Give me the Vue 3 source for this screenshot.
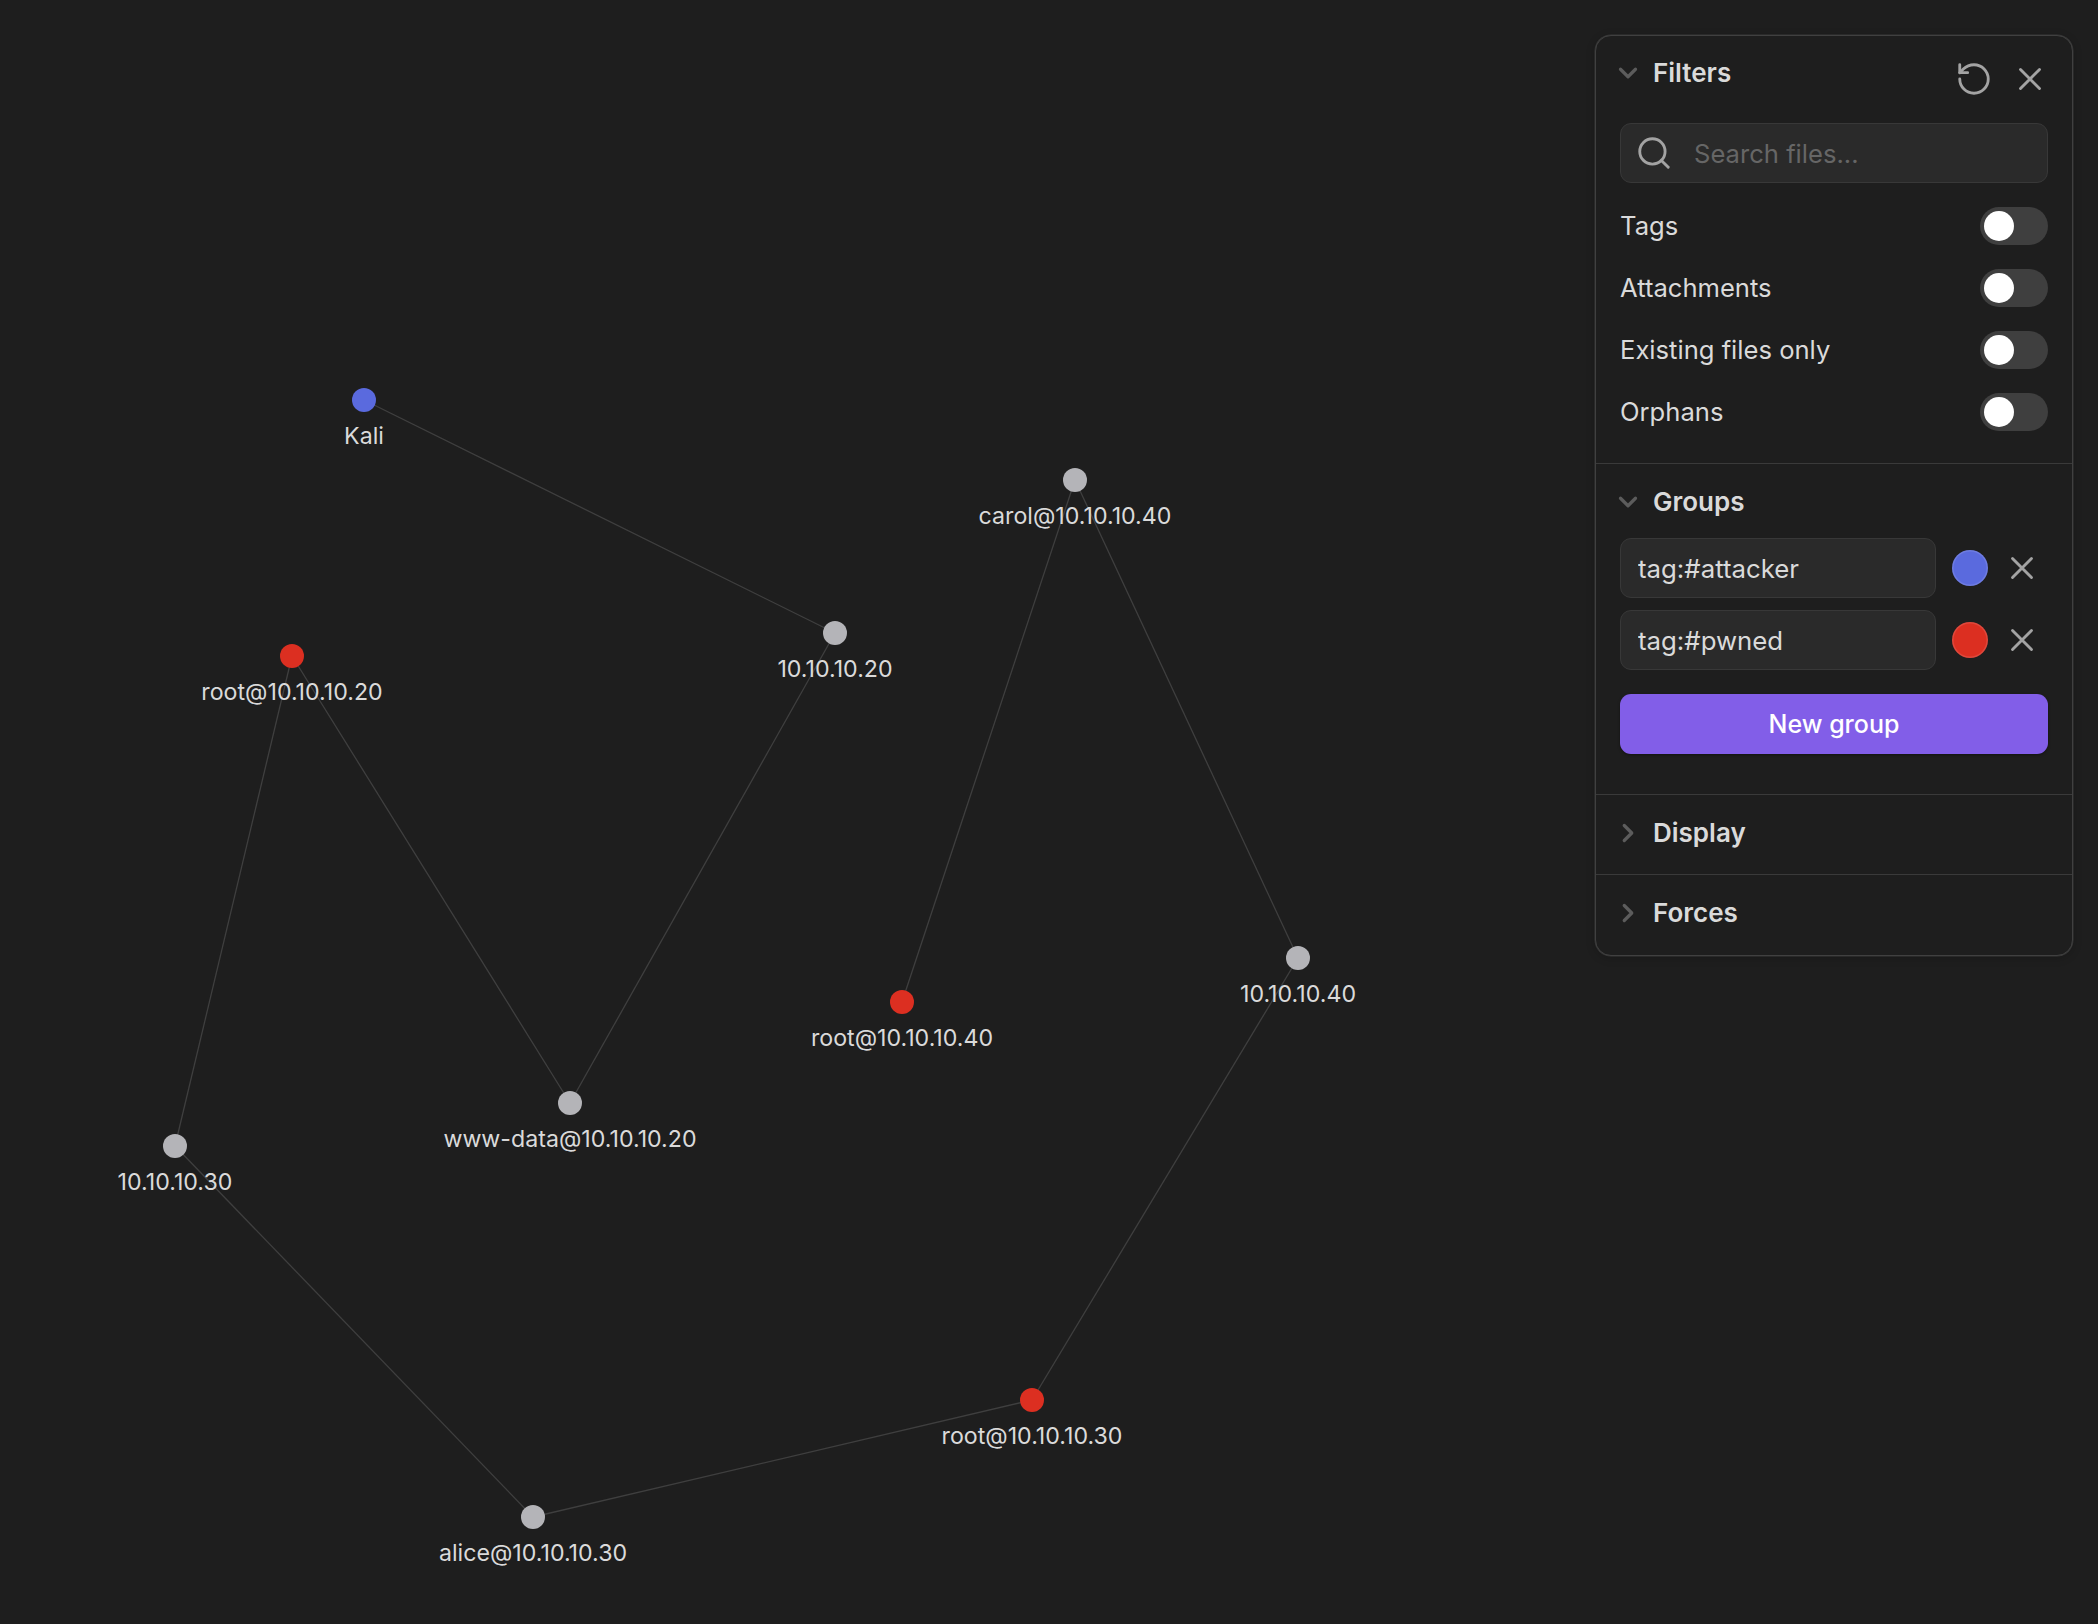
<template>
  <div class="page">
    <svg class="graph" width="2098" height="1624" viewBox="0 0 2098 1624">
      <line
        v-for="(edge, i) in edges"
        :key="i"
        :x1="nodes[edge[0]].x"
        :y1="nodes[edge[0]].y"
        :x2="nodes[edge[1]].x"
        :y2="nodes[edge[1]].y"
        class="edge"
      />
      <g v-for="(node, id) in nodes" :key="id">
        <circle :cx="node.x" :cy="node.y" r="12" :fill="colors[node.type]" />
        <text :x="node.x" :y="node.y + 43.5" text-anchor="middle" class="node-label">{{ node.label }}</text>
      </g>
    </svg>

    <aside class="panel">
      <section class="section">
        <div class="section-head">
          <svg class="chevron" viewBox="0 0 24 24"><path d="m6 9 6 6 6-6" /></svg>
          <span class="section-title">Filters</span>
          <div class="head-actions">
            <svg class="icon" viewBox="0 0 24 24">
              <path d="M3 12a9 9 0 1 0 9-9 9.75 9.75 0 0 0-6.74 2.74L3 8" />
              <path d="M3 3v5h5" />
            </svg>
            <svg class="icon" viewBox="0 0 24 24"><path d="M18 6 6 18M6 6l12 12" /></svg>
          </div>
        </div>
        <div class="search">
          <svg class="icon search-icon" viewBox="0 0 24 24">
            <circle cx="11" cy="11" r="8" />
            <path d="m21 21-4.3-4.3" />
          </svg>
          <input class="search-input" placeholder="Search files..." />
        </div>
        <div v-for="label in filters" :key="label" class="toggle-row">
          <span class="toggle-label">{{ label }}</span>
          <div class="toggle"><div class="knob"></div></div>
        </div>
      </section>

      <section class="section">
        <div class="section-head">
          <svg class="chevron" viewBox="0 0 24 24"><path d="m6 9 6 6 6-6" /></svg>
          <span class="section-title">Groups</span>
        </div>
        <div class="groups">
          <div v-for="group in groups" :key="group.query" class="group-row">
            <input class="group-input" :value="group.query" />
            <div class="swatch" :style="{ background: group.color }"></div>
            <svg class="icon group-x" viewBox="0 0 24 24"><path d="M18 6 6 18M6 6l12 12" /></svg>
          </div>
        </div>
        <button class="new-group">New group</button>
      </section>

      <section v-for="title in collapsed" :key="title" class="section">
        <div class="section-head">
          <svg class="chevron" viewBox="0 0 24 24"><path d="m9 18 6-6-6-6" /></svg>
          <span class="section-title">{{ title }}</span>
        </div>
      </section>
    </aside>
  </div>
</template>

<script setup>
const colors = {
  attacker: '#5a6ade',
  pwned: '#dc2f21',
  plain: '#b4b4b8'
};

const nodes = {
  kali: { x: 364, y: 400, label: 'Kali', type: 'attacker' },
  host20: { x: 835, y: 633, label: '10.10.10.20', type: 'plain' },
  carol: { x: 1075, y: 480, label: 'carol@10.10.10.40', type: 'plain' },
  root20: { x: 292, y: 656, label: 'root@10.10.10.20', type: 'pwned' },
  www: { x: 570, y: 1103, label: 'www-data@10.10.10.20', type: 'plain' },
  root40: { x: 902, y: 1002, label: 'root@10.10.10.40', type: 'pwned' },
  host40: { x: 1298, y: 958, label: '10.10.10.40', type: 'plain' },
  host30: { x: 175, y: 1146, label: '10.10.10.30', type: 'plain' },
  alice: { x: 533, y: 1517, label: 'alice@10.10.10.30', type: 'plain' },
  root30: { x: 1032, y: 1400, label: 'root@10.10.10.30', type: 'pwned' }
};

const edges = [
  ['kali', 'host20'],
  ['host20', 'www'],
  ['www', 'root20'],
  ['root20', 'host30'],
  ['host30', 'alice'],
  ['alice', 'root30'],
  ['root30', 'host40'],
  ['host40', 'carol'],
  ['carol', 'root40']
];

const filters = ['Tags', 'Attachments', 'Existing files only', 'Orphans'];

const groups = [
  { query: 'tag:#attacker', color: '#5a6ade' },
  { query: 'tag:#pwned', color: '#dc2f21' }
];

const collapsed = ['Display', 'Forces'];
</script>

<style>
body {
  background: #1e1e1e;
}
</style>

<style scoped>
.page {
  position: relative;
  width: 2098px;
  height: 1624px;
  overflow: hidden;
  background: #1e1e1e;
  font-family: Inter, "Liberation Sans", sans-serif;
  color: #dadada;
}

.graph {
  display: block;
}

.edge {
  stroke: #3f3f3f;
  stroke-width: 1.3;
}

.node-label {
  fill: #dadada;
  font-size: 23.2px;
}

.panel {
  position: absolute;
  top: 35px;
  left: 1595px;
  width: 478px;
  box-sizing: border-box;
  background: #1e1e1e;
  border: 1px solid #404040;
  border-radius: 16px;
  box-shadow: 0 0 0 0.5px #383838, 0 2px 10px rgba(0, 0, 0, 0.2);
}

.section {
  padding: 17px 24px 20px;
}

.section:first-child {
  padding-top: 16px;
}

.section:last-child {
  padding-bottom: 21px;
}

.section + .section {
  border-top: 1px solid #3a3a3a;
}

.section-head {
  display: flex;
  align-items: center;
  height: 42px;
}

.chevron {
  width: 30px;
  height: 30px;
  margin-left: -7px;
  margin-right: 10px;
  fill: none;
  stroke: #5c5c5c;
  stroke-width: 2.6;
  stroke-linecap: round;
  stroke-linejoin: round;
}

.section-title {
  margin-top: -2px;
  font-size: 26px;
  font-weight: 600;
}

.head-actions {
  display: flex;
  align-items: center;
  gap: 18px;
  margin-left: auto;
  margin-top: 11px;
  margin-right: -1px;
}

.icon {
  width: 38px;
  height: 38px;
  fill: none;
  stroke: #a3a3a3;
  stroke-width: 1.8;
  stroke-linecap: round;
  stroke-linejoin: round;
  flex-shrink: 0;
}

.search {
  display: flex;
  align-items: center;
  box-sizing: border-box;
  height: 60px;
  margin-top: 29px;
  margin-bottom: 12px;
  padding-left: 14px;
  background: #2a2a2a;
  border: 1px solid #383838;
  border-radius: 11px;
}

.search-input {
  flex: 1;
  min-width: 0;
  margin-left: 21px;
  padding: 0;
  border: none;
  outline: none;
  background: transparent;
  font: inherit;
  font-size: 25.6px;
  color: #dadada;
}

.search-input::placeholder {
  color: #666666;
  opacity: 1;
}

.toggle-row {
  display: flex;
  align-items: center;
  justify-content: space-between;
  height: 62px;
  font-size: 25.6px;
}

.toggle-label {
  margin-top: -2px;
}

.toggle {
  display: flex;
  align-items: center;
  box-sizing: border-box;
  width: 68px;
  height: 38px;
  padding-left: 4px;
  background: #3f3f3f;
  border-radius: 19px;
}

.knob {
  width: 30px;
  height: 30px;
  border-radius: 50%;
  background: #ffffff;
}

.groups {
  display: flex;
  flex-direction: column;
  gap: 12px;
  margin-top: 15px;
}

.group-row {
  display: flex;
  align-items: center;
}

.group-input {
  box-sizing: border-box;
  width: 316px;
  height: 60px;
  padding: 0 17px;
  background: #2a2a2a;
  border: 1px solid #383838;
  border-radius: 11px;
  outline: none;
  font: inherit;
  font-size: 25.8px;
  color: #dadada;
}

.swatch {
  width: 36px;
  height: 36px;
  margin-left: 16px;
  border-radius: 50%;
  box-shadow: inset 0 0 0 1.5px rgba(255, 255, 255, 0.12);
}

.group-x {
  margin-left: 15px;
}

.new-group {
  display: block;
  width: 100%;
  height: 60px;
  margin-top: 24px;
  margin-bottom: 20px;
  padding: 0;
  border: none;
  border-radius: 11px;
  background: #825ee8;
  box-shadow: 0 1px 3px rgba(0, 0, 0, 0.4);
  font: inherit;
  font-size: 25px;
  font-weight: 500;
  color: #ffffff;
}
</style>
